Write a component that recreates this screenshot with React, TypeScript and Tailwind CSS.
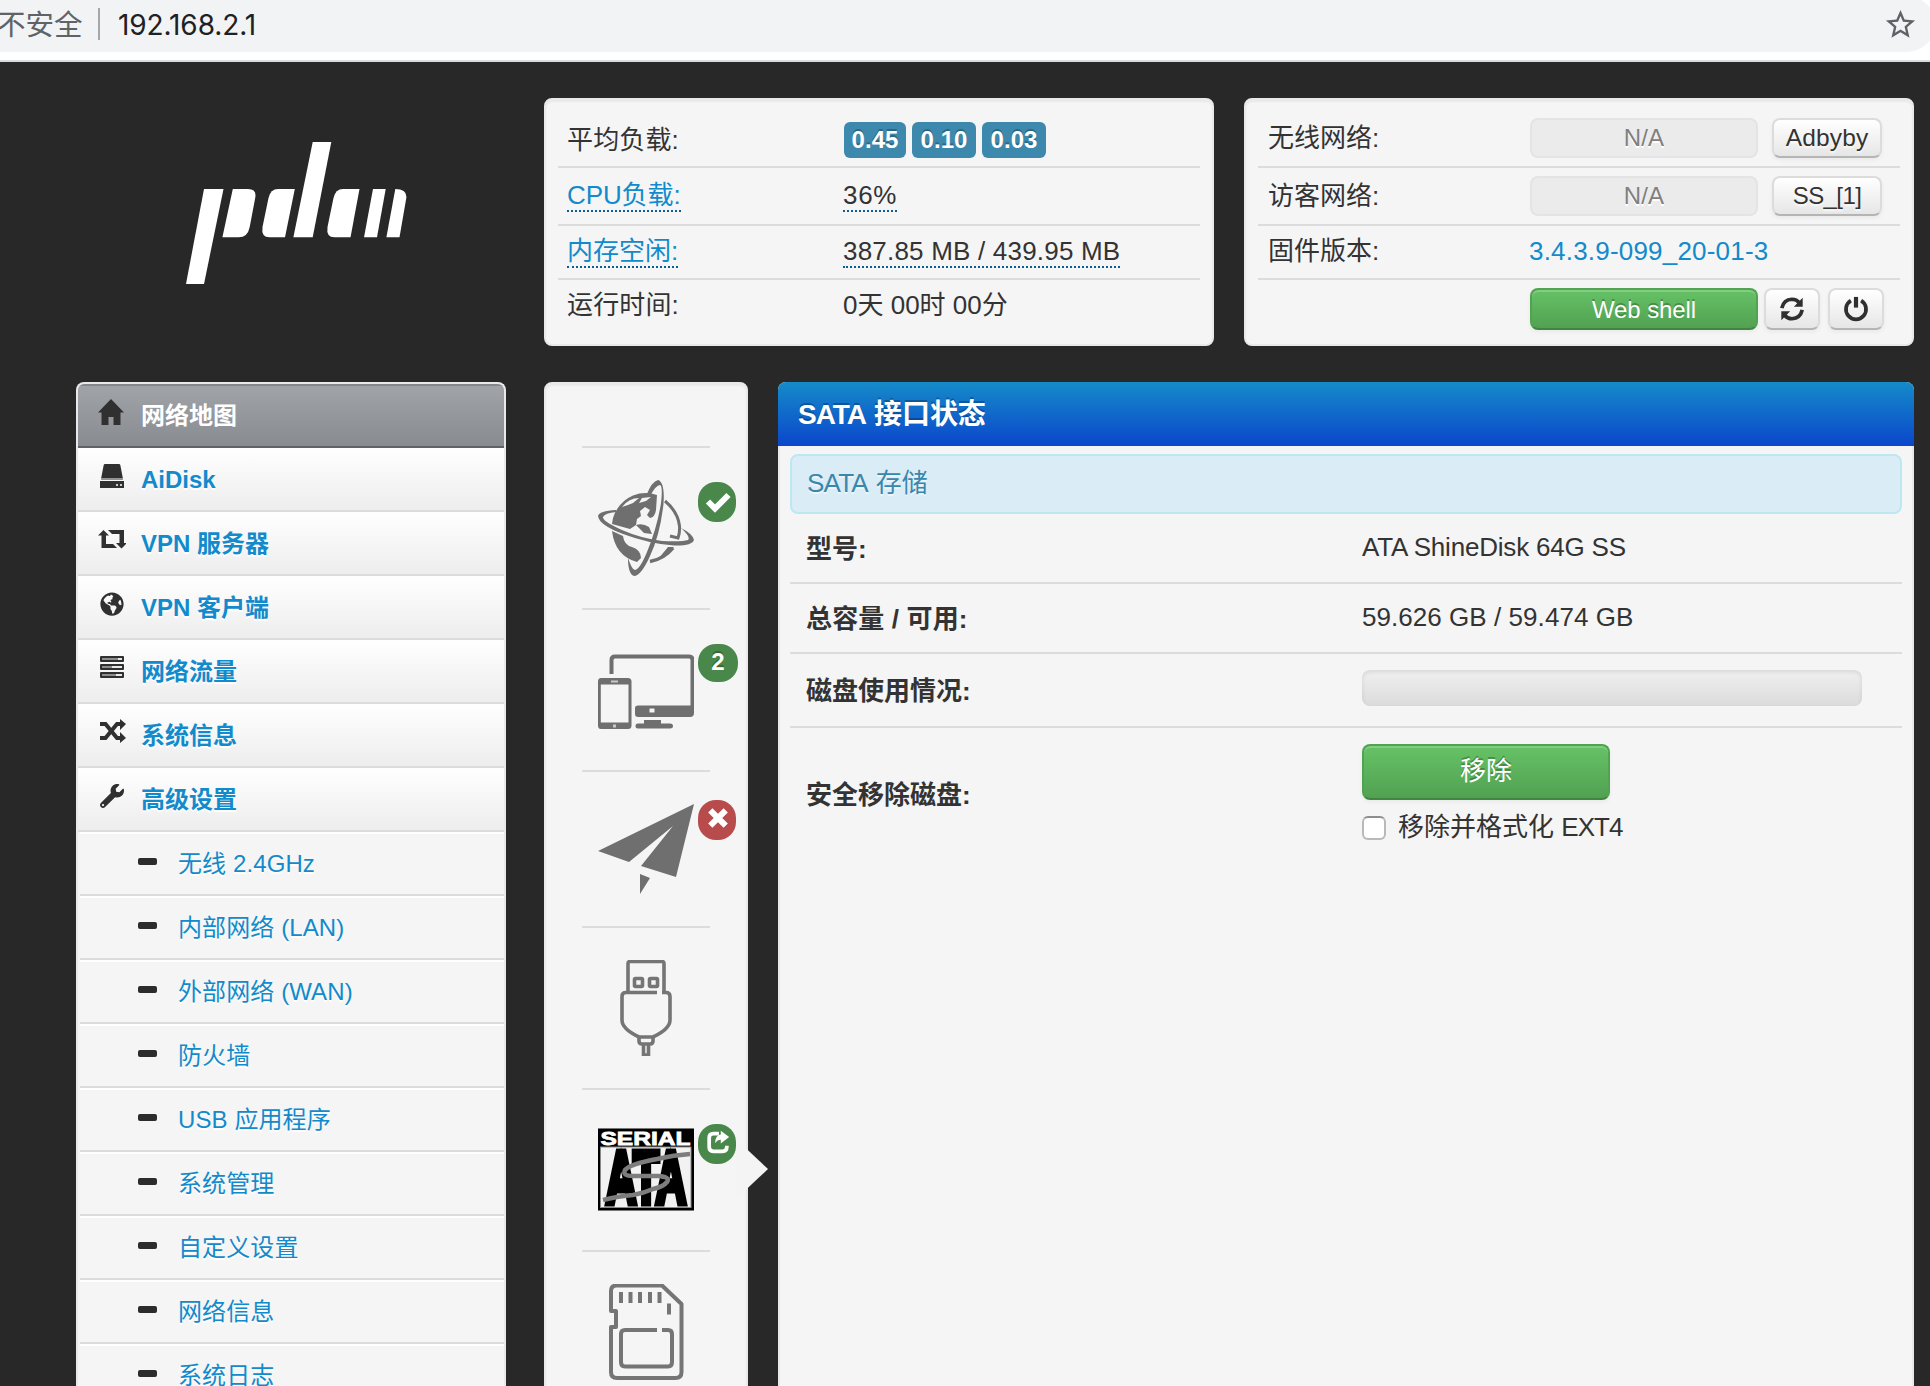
import React from "react";
import { FaWrench, FaGlobeAmericas } from "react-icons/fa";
import { MdStarBorder } from "react-icons/md";

const sans = "font-['Liberation_Sans','Noto_Sans_CJK_SC',sans-serif]";

function Logo() {
  return (
    <svg width="222" height="144" viewBox="185 141 222 144" fill="#fff" className="h-[144px] w-[222px]">
      <path d="M204 189h19.500L204 284h-18z" />
      <path d="M232.800 189H248q9 0 7.200 9l-5.500 29q-2 10.300-11 10.300h-16.300z" />
      <path d="M294.800 189H278q-7.500 0-9.500 9l-6 29q-1.500 10.300 7 10.300H285z" />
      <path d="M312.700 142h18.600l-18.600 95.300h-19.300z" />
      <path d="M359.500 189H343q-7.500 0-9.500 9l-6 29q-1.500 10.300 7 10.300h16z" />
      <path d="M373 189h12.700L377 237.300h-13z" />
      <path d="M395.300 189q12 0 11 9l-6.800 39.300h-13.100z" />
    </svg>
  );
}

const Svg = ({ children, className = "size-7", fill = "#303030", box = "0 0 28 28" }: { children: React.ReactNode; className?: string; fill?: string; box?: string }) => (
  <svg viewBox={box} className={`shrink-0 ${className}`} fill={fill}>{children}</svg>
);

const HomeIcon = () => <Svg><path d="M14 1 1 14.500h3.500V27h7v-8h5v8h7V14.500H27z" /></Svg>;
const DiskIcon = () => (
  <Svg><path d="M7 2h14q1 0 1.300 1l2.700 14H3L5.700 3Q6 2 7 2zM2 19h24v7H2zM3 17.500h22v-1H3z" /><path d="M18 22h2v2h-2zM22 22h2v2h-2z" fill="#ccc" /></Svg>
);
const RetweetIcon = () => (
  <Svg><path d="M5.500 4 11 9.500H8V18h7l4 4H3.500V9.500H0zM10 4h16v13h3L23.500 22.500 18 17h3.500V8H14z" /></Svg>
);
const GlobeIcon = () => <FaGlobeAmericas className="mx-0.5 size-6 text-[#303030]" />;
const TasksIcon = () => (
  <Svg>
    <rect x="2" y="2" width="24" height="6" rx="1" /><rect x="2" y="10" width="24" height="6" rx="1" /><rect x="2" y="18" width="24" height="6" rx="1" />
    <path d="M4 4h16v2H4zM4 12h10v2H4zM4 20h14v2H4z" fill="#8d8d8d" />
    <path d="M20 4h4v2h-4zM14 12h10v2H14zM18 20h6v2h-6z" fill="#e8e8e8" />
  </Svg>
);
const ShuffleIcon = () => (
  <Svg fill="none"><path d="M2 6h5.500l11.500 14h4M2 20h5.500L19 6h4" stroke="#303030" strokeWidth="4" /><path d="M22 1l6 5-6 6zM22 14l6 6-6 5z" fill="#303030" /></Svg>
);
const WrenchIcon = () => <FaWrench className="mx-0.5 size-6 text-[#303030]" />;

const menu = [
  { label: "AiDisk", Icon: DiskIcon },
  { label: "VPN 服务器", Icon: RetweetIcon },
  { label: "VPN 客户端", Icon: GlobeIcon },
  { label: "网络流量", Icon: TasksIcon },
  { label: "系统信息", Icon: ShuffleIcon },
  { label: "高级设置", Icon: WrenchIcon },
];

const subMenu = ["无线 2.4GHz", "内部网络 (LAN)", "外部网络 (WAN)", "防火墙", "USB 应用程序", "系统管理", "自定义设置", "网络信息", "系统日志"];

function Sidebar() {
  return (
    <nav className="h-[1010px] w-[430px] shrink-0 overflow-hidden rounded-t-lg border-2 border-b-0 border-[#e9e9e9] bg-[#f5f5f5] text-2xl leading-8">
      <div className="flex h-16 items-center border-t-2 border-b-2 border-t-[#85878a] border-b-[#606266] bg-linear-to-b/srgb from-[#a0a3a8] to-[#888b90] pl-[19px]">
        <div className="pb-2"><HomeIcon /></div>
        <span className="pl-4 font-bold text-white">网络地图</span>
      </div>
      {menu.map(({ label, Icon }) => (
        <div key={label} className="flex h-16 items-center border-b-2 border-[#dcdcdc] bg-linear-to-b/srgb from-white to-[#ededed] pl-5">
          <div className="pb-1.5"><Icon /></div>
          <span className="pl-[15px] pt-px font-bold text-[#128acb] [text-shadow:0_2px_0_#fff]">{label}</span>
        </div>
      ))}
      {subMenu.map((label) => (
        <div key={label} className="ml-0.5 flex h-16 items-center border-t-2 border-b-2 border-t-white border-b-[#dcdcdc] pl-[58px]">
          <span className="-mt-1.5 h-[7px] w-[19px] rounded-[2px] bg-[#2c2c2c]" />
          <span className="pl-[21px] tracking-[0.1px] text-[#128acb] [text-shadow:0_2px_0_#fff]">{label}</span>
        </div>
      ))}
    </nav>
  );
}

const well = "rounded-lg border-2 border-[#e9e9e9] bg-[#f5f5f5] shadow-[inset_0_2px_2px_rgba(0,0,0,0.05)]";
const dotted = "border-b-2 border-dotted border-[#0b5f90]";
const grayBtn = "flex items-center justify-center rounded-lg border-2 border-[#dcdcdc] border-b-[#b5b5b5] bg-linear-to-b/srgb from-white to-[#e6e6e6] text-[#333] shadow-[0_2px_4px_rgba(0,0,0,0.05)] [text-shadow:0_2px_2px_rgba(255,255,255,0.75)]";
const greenBtn = "flex items-center justify-center rounded-lg border-2 border-[#51a351] border-b-[#428542] bg-linear-to-b/srgb from-[#66c266] to-[#51a151] text-white shadow-[inset_0_2px_0_rgba(255,255,255,0.2),0_2px_4px_rgba(0,0,0,0.05)] [text-shadow:0_-2px_0_rgba(0,0,0,0.25)]";

function StatusPanel() {
  return (
    <section className={`${well} h-[248px] w-[670px] px-3 text-[26px] leading-[30px] tracking-[0.15px] text-[#333]`}>
      <div className="flex h-[68px] items-center border-b-2 border-[#dcdcdc] pl-[9px] pt-3.5">
        <span className="w-[277px]">平均负载:</span>
        <div className="flex gap-1.5 text-2xl font-bold leading-7 tracking-[0.1px] text-white [text-shadow:0_-2px_0_rgba(0,0,0,0.25)]">
          {["0.45", "0.10", "0.03"].map((v) => (
            <span key={v} className="flex h-9 w-16 items-center justify-center rounded-md bg-[#3d88ad] first:w-[62px]">{v}</span>
          ))}
        </div>
      </div>
      <div className="flex h-[58px] items-center border-b-2 border-[#dcdcdc] pl-[9px]">
        <div className="w-[276px]"><span className={`inline-block tracking-[-0.1px] text-[#128acb] ${dotted}`}>CPU负载:</span></div>
        <span className={`tracking-[0.7px] ${dotted}`}>36%</span>
      </div>
      <div className="flex h-[54px] items-center border-b-2 border-[#dcdcdc] pl-[9px]">
        <div className="w-[276px]"><span className={`inline-block tracking-normal text-[#128acb] ${dotted}`}>内存空闲:</span></div>
        <span className={`tracking-[0.2px] ${dotted}`}>387.85 MB / 439.95 MB</span>
      </div>
      <div className="flex h-[50px] items-center pl-[9px]">
        <span className="w-[276px]">运行时间:</span>
        <span className="tracking-normal">0天 00时 00分</span>
      </div>
    </section>
  );
}

const RefreshIcon = () => (
  <Svg className="size-[26px]" fill="none"><g stroke="#2f2f2f" strokeWidth="4"><path d="M3 13Q5 4 14 3.500q5 0 8 4M25 15Q23 24 14 24.500q-5 0-8-4" /></g><path d="M25.500 2v9.500H16zM2.500 26V16.500H12z" fill="#2f2f2f" /></Svg>
);
const PowerIcon = () => (
  <Svg className="size-[26px]" fill="none"><path d="M8.500 5a10.800 10.800 0 1 0 11 0" stroke="#2f2f2f" strokeWidth="4" /><path d="M14 1v11.500" stroke="#2f2f2f" strokeWidth="4.500" /></Svg>
);

function NetworkPanel() {
  return (
    <section className={`${well} h-[248px] w-[670px] px-3 text-[26px] leading-[30px] tracking-[0.15px] text-[#333]`}>
      {[["无线网络:", "Adbyby"], ["访客网络:", "SS_[1]"]].map(([label, btn], i) => (
        <div key={label} className={`flex items-center border-b-2 border-[#dcdcdc] pl-2.5 ${i ? "h-[58px]" : "h-[68px] pt-2.5"}`}>
          <span className="w-[262px] tracking-normal">{label}</span>
          <div className="flex h-10 w-[228px] items-center justify-center rounded-lg border-2 border-[#e4e4e4] bg-[#ebebeb] text-2xl text-[#808080] [text-shadow:0_2px_0_#fff]">N/A</div>
          <button className={`${grayBtn} ml-3.5 h-10 w-[110px] ${i ? "text-2xl tracking-[-0.6px]" : "text-[24.500px]"}`}>{btn}</button>
        </div>
      ))}
      <div className="flex h-[54px] items-center border-b-2 border-[#dcdcdc] pl-2.5 pb-0.5">
        <span className="w-[261px] tracking-normal">固件版本:</span>
        <span className="tracking-[0.200px] text-[#128acb]">3.4.3.9-099_20-01-3</span>
      </div>
      <div className="flex pl-[272px] pt-2">
        <button className={`${greenBtn} h-[42px] w-[228px] pt-0.5 text-2xl tracking-[-0.1px]`}>Web shell</button>
        <button className={`${grayBtn} ml-1.5 h-[42px] w-14`}><RefreshIcon /></button>
        <button className={`${grayBtn} ml-2 h-[42px] w-14`}><PowerIcon /></button>
      </div>
    </section>
  );
}

const big = "size-24";
const OrbitIcon = () => (
  <Svg className={big} box="0 0 96 96" fill="#6f6f6f">
    <path d="M15 38Q20 22 35 15.500 47 11 59 15L58 30q-1 7-6 8l-3-3 3-5-5-3-5 4 1 5-4 3-1 6-6 4-18-5z" />
    <path d="M24 27q7-9 17-9l-6 5-5 2zM44 18l9-1-5 4-7 2z" fill="#f5f5f5" />
    <path d="M38 45q7-2 13 2l3 7-8-1zM14 51l11 5q1 9 9 11 9 3 9 11l-4 4Q17 76 14 51z" />
    <g fill="none" stroke="#6f6f6f">
      <path d="M67 21Q80 32 81.500 46q.5 6-1.500 12l-8-2" strokeWidth="3" />
      <path d="M75 68Q66 79 52 81.500" strokeWidth="3.500" />
    </g>
    <path d="M68 75l8-8H70l-9 11z" />
    <path fillRule="evenodd" d="M18 30Q1 31 0 36 1 45 25 54 52 64 76 65.500 94 66 96 60 95 54 83 48q10 9 7 12-6 2-26 1Q42 58 24 50 4 41 5 37q2-4 13-5z" />
    <path fillRule="evenodd" d="M48 16Q54 1 60 0q7 2 5.500 24Q62 55 52 76 43 96 36 96q-6-2-6-18 4 12 7 12 5-1 12-18 10-24 14-49 2-17-1-18-4 0-10 11z" />
  </Svg>
);
const DevicesIcon = () => (
  <Svg className={big} box="0 0 96 96" fill="#6f6f6f">
    <path d="M13.500 32V18q0-3.500 3.500-3.500h74q3.500 0 3.500 3.500v50" fill="none" stroke="#6f6f6f" strokeWidth="4" />
    <path d="M37 66q0-2.500 3-2.500h56V71q0 4-4 4H40q-3 0-3-3z" /><path d="M51.500 66.500h5v4h-5z" fill="#f5f5f5" />
    <path d="M46 78h17v3.500h9q3 0 3 2.500 0 2.500-3 2.500H40q-2.500 0-2.500-2.500t2.500-2.500h6z" />
    <path fillRule="evenodd" d="M3 36h27q3.500 0 3.500 3.500v44q0 3.500-3.500 3.500H3q-3 0-3-3.500v-44Q0 36 3 36zM2.800 42.500v38H30.500v-38z" />
    <path d="M13 38.500h7v2h-7zM15 82.500h3v3h-3z" fill="#c9c9c9" />
  </Svg>
);
const PlaneIcon = () => (
  <Svg className={big} box="0 0 96 96" fill="#6f6f6f"><path d="M96 0 0 47l31 11 44-36-32 40 35 11zM42 70l10 4-10 16z" /></Svg>
);
const UsbIcon = () => (
  <Svg className={big} box="0 0 96 96" fill="none">
    <g stroke="#757575" strokeWidth="3.600">
      <path d="M30 32V3.500Q30 1.500 32 1.500H64q2 0 2 2V32" /><rect x="36.500" y="18.500" width="8" height="8" rx="1" /><rect x="51.500" y="18.500" width="8" height="8" rx="1" />
      <path d="M59 32.500H28q-4 0-4 4V60q0 9 17 17H55Q72 69 72 60V36.500q0-4-4-4h-4" /><path d="M41 77v4q0 3 3 3h8q3 0 3-3v-4M45.500 84v11h5V84" />
    </g>
  </Svg>
);
const SataIcon = () => (
  <Svg className={big} box="0 0 96 96" fill="#000">
    <rect y="6" width="96" height="83" />
    <path d="M0 6.500h96M0 88.500h96" stroke="#777" strokeWidth="1" />
    <rect x="2.500" y="25" width="90.500" height="60.500" fill="#f2f2f2" stroke="#888" />
    <text x="2.500" y="22.500" fontSize="19" fontWeight="700" textLength="90" lengthAdjust="spacingAndGlyphs" fill="#fff" stroke="#fff" strokeWidth=".8" fontFamily="Liberation Sans, sans-serif">SERIAL</text>
    <text transform="translate(8 81) scale(1 1.800)" fontSize="41" fontWeight="700" textLength="80" lengthAdjust="spacingAndGlyphs" stroke="#000" strokeWidth="4" fontFamily="Liberation Sans, sans-serif">ATA</text>
    <path d="M92 32Q76 33 59 37 32 42 27 48q-3 6 8 6H60q13 1 9 6-4 5-14 7-9 4-20 6-14 1-30 5" fill="none" stroke="#7d7d7d" strokeWidth="4.500" />
  </Svg>
);
const SdIcon = () => (
  <Svg className={big} box="0 0 96 96" fill="none">
    <g stroke="#757575" strokeWidth="4">
      <path d="M13 27V7q0-5.500 5.500-5.500H64L83.500 20V88q0 6-6 6H19q-6 0-6-6V43h5V27z" strokeLinejoin="round" />
      <path d="M23 8v11M32.500 8v11M42 8v11M52 8v11M61.500 8v11M71 19.500v11" />
      <path d="M59 46H27q-4 0-4 4V78q0 4.500 4 4.500H70q4 0 4-4.500V50q0-4-4-4h-6" />
    </g>
  </Svg>
);

const badge = "absolute left-[152px] flex items-center justify-center rounded-[18px]";
const CheckBadge = () => (
  <span className={`${badge} top-9 h-10 w-[38px] bg-[#49884a] pl-0.5`}><Svg fill="none"><path d="M4 13.500 11 20.500 24.500 7" stroke="#fff" strokeWidth="6" /></Svg></span>
);
const CountBadge = () => <span className={`${badge} top-9 h-[38px] w-10 bg-[#49884a] pb-0.5 text-2xl font-bold leading-7 text-white [text-shadow:0_-2px_0_rgba(0,0,0,0.25)]`}>2</span>;
const CrossBadge = () => (
  <span className={`${badge} top-[30px] h-10 w-[38px] bg-[#b84b4b] pb-1 pl-0.5`}><Svg fill="none" className="size-6"><path d="M5 5 23 23M23 5 5 23" stroke="#fff" strokeWidth="7" /></Svg></span>
);
const ShareBadge = () => (
  <>
    <span className="absolute left-[190px] top-[51px] h-0 w-0 border-y-[30px] border-l-[32px] border-y-transparent border-l-[#f4f4f4]" />
    <span className={`${badge} top-9 h-10 w-[38px] bg-[#49884a] pb-1 pl-0.5`}>
      <Svg fill="none" className="size-[26px]"><path d="M15 5h-6q-4.500 0-4.500 4.500v10q0 4.500 4.500 4.500h10q4.500 0 4.500-4.500v-1.500" stroke="#fff" strokeWidth="4" /><path d="M17 2l9 6.500-9 7v-4q-3-.5-6 3.500 0-8 6-9z" fill="#fff" /></Svg>
    </span>
  </>
);

const devices: { Icon: React.FC; Badge?: React.FC; short?: boolean }[] = [
  { Icon: OrbitIcon, Badge: CheckBadge },
  { Icon: DevicesIcon, Badge: CountBadge },
  { Icon: PlaneIcon, Badge: CrossBadge, short: true },
  { Icon: UsbIcon },
  { Icon: SataIcon, Badge: ShareBadge },
  { Icon: SdIcon },
];

function DeviceRail() {
  return (
    <aside className={`${well} h-[1012px] w-[204px] shrink-0 pt-[62px]`}>
      {devices.map(({ Icon, Badge, short }, i) => (
        <div key={i} className={`relative flex justify-center pt-[34px] ${short ? "h-[156px]" : "h-[162px]"}`}>
          <span className="absolute left-9 top-0 h-0.5 w-32 bg-[#dcdcdc]" />
          <Icon />
          {Badge && <Badge />}
        </div>
      ))}
    </aside>
  );
}

function DiskPanel() {
  return (
    <section className="flex h-[1010px] w-[1136px] shrink-0 flex-col overflow-hidden rounded-t-lg bg-[#f5f5f5] text-[26px] leading-[30px] text-[#333]">
      <h1 className="flex h-16 shrink-0 items-center bg-linear-to-b/srgb from-[#158bc9] to-[#0b46cc] pl-5 pt-0.5 text-[28px] font-bold text-white [text-shadow:0_-2px_0_rgba(0,0,0,0.25)]">
        <span className="tracking-[-1px]">SATA</span><span className="pl-2 tracking-[-0.1px]">接口状态</span>
      </h1>
      <div className="flex-1 border-x-2 border-[#e9e9e9] px-2.5 pt-2">
        <div className="flex h-[60px] items-center rounded-lg border-2 border-[#bce8f1] bg-[#daecf6] pb-0.5 pl-[15px] text-[#3a87ad] [text-shadow:0_2px_0_rgba(255,255,255,0.5)]">
          <span className="tracking-[-0.8px]">SATA</span><span className="pl-2">存储</span>
        </div>
        <div className="flex h-[70px] items-center border-b-2 border-[#dcdcdc] pl-4">
          <span className="w-[556px] pt-0.5 font-bold">型号:</span><span className="pb-0.5 tracking-[-0.2px]">ATA ShineDisk 64G SS</span>
        </div>
        <div className="flex h-[70px] items-center border-b-2 border-[#dcdcdc] pl-4">
          <span className="w-[556px] pt-0.5 font-bold tracking-[0.15px]">总容量 / 可用:</span><span className="pb-0.5 tracking-[0.05px]">59.626 GB / 59.474 GB</span>
        </div>
        <div className="flex h-[74px] items-center border-b-2 border-[#dcdcdc] pl-4">
          <span className="w-[556px] pt-0.5 font-bold">磁盘使用情况:</span>
          <div className="mb-1 h-9 w-[500px] rounded-lg bg-linear-to-b/srgb from-[#f0f0f0] to-[#dbdbdb] shadow-[inset_0_2px_4px_rgba(0,0,0,0.1)]" />
        </div>
        <div className="flex pl-4 pt-4">
          <span className="w-[556px] pt-9 font-bold">安全移除磁盘:</span>
          <div>
            <button className={`${greenBtn} h-14 w-[248px] pb-0.5 text-[26px]`}>移除</button>
            <label className="mt-3 flex items-center">
              <span className="mt-0.5 size-6 rounded-md border-2 border-[#b9b9b9] border-t-[#8f8f8f] bg-white" />
              <span className="pl-3">移除并格式化 <span className="tracking-[-0.9px]">EXT4</span></span>
            </label>
          </div>
        </div>
      </div>
    </section>
  );
}

export default function App() {
  return (
    <div className={`flex h-[1386px] w-[1930px] flex-col overflow-hidden bg-[#282828] ${sans}`}>
      <header className="h-[62px] shrink-0 overflow-hidden border-b-2 border-[#dadce0] bg-white">
        <div className="-ml-[3px] -mt-1 flex h-14 w-[1938px] items-center rounded-r-full bg-[#f1f3f4]">
          <span className="w-[85px] whitespace-nowrap pt-0.5 text-[28.500px] leading-8 text-[#5f6368]">不安全</span>
          <span className="ml-4 h-8 w-0.5 bg-[#a5a7aa]" />
          <span className="ml-[18px] pt-0.5 font-['Inter'] text-[28px] leading-8 tracking-[-0.1px] text-[#202124]">192.168.2.1</span>
          <MdStarBorder className="ml-auto mr-[17px] size-[35px] text-[#5f6368]" />
        </div>
      </header>
      <div className="flex h-[320px] shrink-0 pt-9">
        <div className="w-[544px] shrink-0 pl-[185px] pt-[43px]"><Logo /></div>
        <StatusPanel />
        <div className="w-[30px]" />
        <NetworkPanel />
      </div>
      <main className="flex flex-1 pl-[76px]">
        <Sidebar />
        <div className="w-[38px] shrink-0" />
        <DeviceRail />
        <div className="w-[30px] shrink-0" />
        <DiskPanel />
      </main>
    </div>
  );
}
